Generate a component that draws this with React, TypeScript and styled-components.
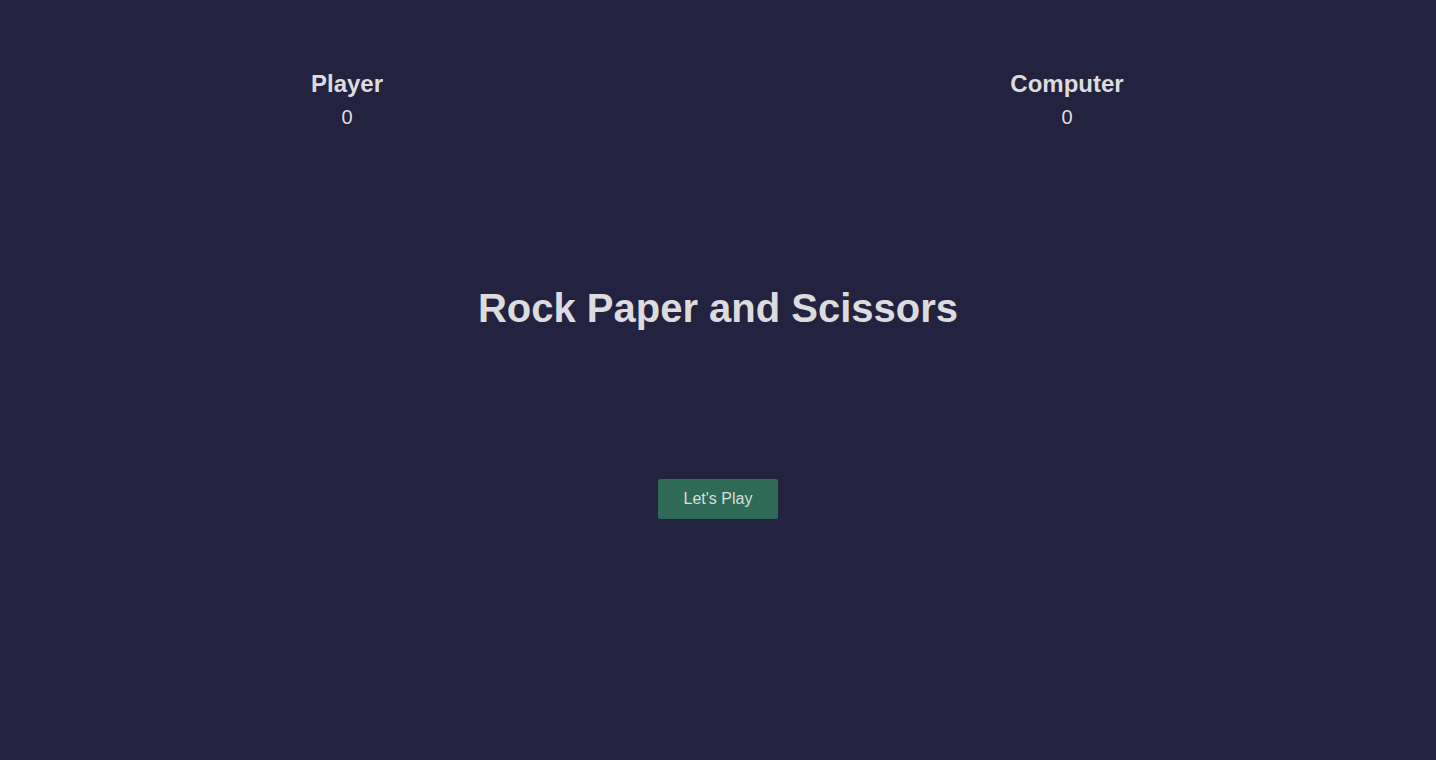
import { FC } from "react";
import styled, { createGlobalStyle } from "styled-components";

const GlobalStyle = createGlobalStyle`
    html, body {
        margin: 0;
        padding: 0;
        background-color: #23223f;
    }
    body {
        font-family: "Liberation Sans", Arial, Helvetica, sans-serif;
        color: #dcdcdf;
    }
`;

const StyledGame = styled.main`
    height: 760px;
    box-sizing: border-box;
    display: flex;
    flex-direction: column;
    align-items: center;
    padding-top: 70px;
    background-color: #23223f;
`;

const Scoreboard = styled.div`
    align-self: stretch;
    display: grid;
    grid-template-columns: 200px 200px;
    column-gap: 520px;
    padding-left: 247px;
`;

const ScoreCard = styled.div`
    display: flex;
    flex-direction: column;
    align-items: center;
    gap: 8px;

    & > h2 {
        margin: 0;
        font-size: 24px;
        font-weight: 700;
        line-height: 28px;
    }
    & > span {
        font-size: 20px;
        line-height: 23px;
    }
`;

const Title = styled.h1`
    margin: 155px 0 0;
    font-size: 40px;
    font-weight: 700;
    line-height: 48px;
`;

const PlayButton = styled.button`
    margin-top: 147px;
    width: 120px;
    height: 40px;
    border: 0;
    border-radius: 2px;
    background-color: #2e6a55;
    color: #d9dedd;
    font-family: inherit;
    font-size: 16px;
    cursor: pointer;
`;

interface ScoreProps {
    name: string;
    score: number;
}

const Score: FC<ScoreProps> = ({ name, score }) => (
    <ScoreCard>
        <h2>{name}</h2>
        <span>{score}</span>
    </ScoreCard>
);

const App: FC = () => {
    return (
        <>
            <GlobalStyle />
            <StyledGame>
                <Scoreboard>
                    <Score name="Player" score={0} />
                    <Score name="Computer" score={0} />
                </Scoreboard>
                <Title>Rock Paper and Scissors</Title>
                <PlayButton>Let's Play</PlayButton>
            </StyledGame>
        </>
    );
};

export default App;
